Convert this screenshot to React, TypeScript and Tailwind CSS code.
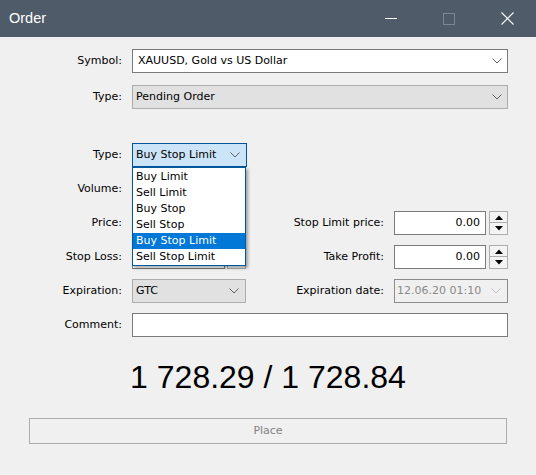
import React from "react";

function Chevron({ color = "#606060" }: { color?: string }) {
  return (
    <svg width="10" height="6" viewBox="0 0 10 6" className="shrink-0">
      <polyline points="0.5,0.5 5,5 9.5,0.5" fill="none" stroke={color} strokeWidth="1" />
    </svg>
  );
}

function Spin() {
  return (
    <div className="flex h-[24px] w-[19px] flex-col">
      <div className="flex h-[12px] items-center justify-center border border-[#adadad] bg-[#f4f4f4]">
        <svg width="8" height="5" viewBox="0 0 8 5">
          <polygon points="0,5 4,0.5 8,5" fill="#000" />
        </svg>
      </div>
      <div className="flex h-[12px] items-center justify-center border border-t-0 border-[#adadad] bg-[#f4f4f4]">
        <svg width="8" height="5" viewBox="0 0 8 5">
          <polygon points="0,0 8,0 4,4.5" fill="#000" />
        </svg>
      </div>
    </div>
  );
}

function NumInput({ value = "", w = "w-[92px]" }: { value?: string; w?: string }) {
  return (
    <div className={`flex h-[24px] ${w} items-center justify-end border border-[#7a7a7a] bg-white pr-[5px]`}>
      {value}
    </div>
  );
}

function Row({
  label,
  children,
  className = "",
}: {
  label: string;
  children?: React.ReactNode;
  className?: string;
}) {
  return (
    <div className={`flex h-[24px] items-center ${className}`}>
      <div className="w-[122px] shrink-0 text-right">{label}</div>
      <div className="ml-[10px] flex h-full flex-1 items-center">{children}</div>
    </div>
  );
}

function RightField({ label, children }: { label: string; children: React.ReactNode }) {
  return (
    <div className="flex h-full flex-1 items-center">
      <div className="flex-1 pr-[10px] text-right">{label}</div>
      {children}
    </div>
  );
}

const items = ["Buy Limit", "Sell Limit", "Buy Stop", "Sell Stop", "Buy Stop Limit", "Sell Stop Limit"];

export default function App() {
  return (
    <div className="h-[475px] w-[536px] overflow-hidden bg-[#f0f0f0] font-['DejaVu_Sans',sans-serif] text-[11px] text-black">
      {/* Title bar */}
      <div className="flex h-[37px] items-center bg-[#4f5b69] text-white">
        <div className="pl-[9px] pt-[1px] font-['Liberation_Sans',sans-serif] text-[14.5px]">Order</div>
        <div className="ml-auto flex items-center pr-[22px]">
          <div className="h-[1px] w-[12px] bg-white" />
          <div className="ml-[46px] h-[12px] w-[12px] border border-[#7d8793]" />
          <svg width="13" height="13" viewBox="0 0 13 13" className="ml-[46px]">
            <line x1="0.5" y1="0.5" x2="12.5" y2="12.5" stroke="#fff" strokeWidth="1.1" />
            <line x1="12.5" y1="0.5" x2="0.5" y2="12.5" stroke="#fff" strokeWidth="1.1" />
          </svg>
        </div>
      </div>

      {/* Body */}
      <div className="flex flex-col pr-[28px] pt-[12px]">
        <Row label="Symbol:">
          <div className="flex h-full flex-1 items-center justify-between border border-[#7a7a7a] bg-white pl-[5px] pr-[5px]">
            <span>XAUUSD, Gold vs US Dollar</span>
            <Chevron />
          </div>
        </Row>
        <Row label="Type:" className="mt-[12px]">
          <div className="flex h-full flex-1 items-center justify-between border border-[#adadad] bg-[#e1e1e1] pl-[3px] pr-[5px]">
            <span>Pending Order</span>
            <Chevron />
          </div>
        </Row>

        <Row label="Type:" className="mt-[34px]">
          <div className="relative h-full w-[115px]">
            <div className="flex h-full items-center justify-between border border-[#005499] bg-[#cce4f7] pl-[3px] pr-[6px]">
              <span>Buy Stop Limit</span>
              <Chevron />
            </div>
            <div className="absolute left-0 top-[24px] z-10 w-[114px] border border-[#005a9e] bg-white pt-[1px] shadow-[2px_2px_3px_rgba(0,0,0,0.35)]">
              {items.map((it) => (
                <div
                  key={it}
                  className={`flex h-[16px] items-center pl-[3px] ${
                    it === "Buy Stop Limit" ? "bg-[#0078d7] text-white" : ""
                  }`}
                >
                  {it}
                </div>
              ))}
            </div>
          </div>
        </Row>

        <Row label="Volume:" className="mt-[10px]">
          <div className="flex w-[114px] justify-between">
            <NumInput w="w-[93px]" />
            <Spin />
          </div>
        </Row>

        <Row label="Price:" className="mt-[10px]">
          <div className="flex w-[114px] justify-between">
            <NumInput w="w-[93px]" />
            <Spin />
          </div>
          <RightField label="Stop Limit price:">
            <div className="flex w-[114px] justify-between">
              <NumInput value="0.00" />
              <Spin />
            </div>
          </RightField>
        </Row>

        <Row label="Stop Loss:" className="mt-[10px]">
          <div className="flex w-[114px] justify-between">
            <NumInput w="w-[93px]" />
            <Spin />
          </div>
          <RightField label="Take Profit:">
            <div className="flex w-[114px] justify-between">
              <NumInput value="0.00" />
              <Spin />
            </div>
          </RightField>
        </Row>

        <Row label="Expiration:" className="mt-[10px]">
          <div className="flex h-full w-[114px] items-center justify-between border border-[#adadad] bg-[#e1e1e1] pl-[3px] pr-[6px]">
            <span>GTC</span>
            <Chevron />
          </div>
          <RightField label="Expiration date:">
            <div className="flex h-full w-[114px] items-center justify-between border border-[#8c8c8c] bg-[#f0f0f0] pl-[2px] pr-[6px] text-[#8a8a8a]">
              <span>12.06.20 01:10</span>
              <Chevron color="#bfbfbf" />
            </div>
          </RightField>
        </Row>

        <Row label="Comment:" className="mt-[10px]">
          <div className="h-full flex-1 border border-[#7a7a7a] bg-white" />
        </Row>
      </div>

      <div className="mt-[21px] flex justify-center font-['Liberation_Sans',sans-serif] text-[32px] leading-[38px]">
        1 728.29 / 1 728.84
      </div>

      <div className="px-[29px] pt-[22px]">
        <div className="flex h-[26px] items-center justify-center border border-[#adadad] bg-[#f0f0f0] text-[#838383]">
          Place
        </div>
      </div>
    </div>
  );
}
